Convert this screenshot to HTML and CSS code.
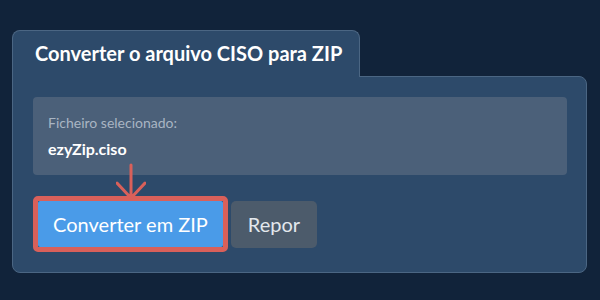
FILE: index.html
```html
<!DOCTYPE html>
<html>
<head>
    <title>Converter CISO para ZIP</title>
    <meta charset="UTF-8">
    <link rel="stylesheet" href="styles.css">
</head>
<body>
    <div class="card">
        <div class="tab">Converter o arquivo CISO para ZIP</div>
        <div class="panel">
            <div class="file-box">
                <div class="file-label">Ficheiro selecionado:</div>
                <div class="file-name">ezyZip.ciso</div>
            </div>
            <div class="actions">
                <div class="highlight">
                    <svg class="arrow" width="30" height="38" viewBox="0 0 30 38">
                        <path d="M15 2 V35 M1 20 L15 35 L29 20" fill="none" stroke="#d9605a" stroke-width="3" stroke-linecap="round" stroke-linejoin="round"/>
                    </svg>
                    <button class="btn btn-primary">Converter em ZIP</button>
                </div>
                <button class="btn btn-reset">Repor</button>
            </div>
        </div>
    </div>
</body>
</html>
```

FILE: styles.css
```css
body {
    font-family: Lato, "Open Sans", sans-serif;
    margin: 0;
    padding: 30px 13px 0 12px;
    background: #11233a;
    color: #ffffff;
}

.card {
    display: flex;
    flex-direction: column;
    align-items: flex-start;
}

.tab {
    position: relative;
    margin-bottom: -1px;
    padding: 10px 17px 12px 22px;
    background: #2d4a6a;
    border: 1px solid #4b6683;
    border-bottom: none;
    border-radius: 8px 8px 0 0;
    font-size: 20px;
    font-weight: bold;
}

.panel {
    align-self: stretch;
    background: #2d4a6a;
    border: 1px solid #4b6683;
    border-radius: 0 8px 8px 8px;
    padding: 20px 19px 20px 20px;
}

.file-box {
    background: #4b6079;
    border-radius: 4px;
    padding: 17px 15px 15px 15px;
    height: 46px;
}

.file-label {
    font-size: 14px;
    color: #a9b5c3;
}

.file-name {
    margin-top: 8px;
    font-size: 16px;
    font-weight: bold;
}

.actions {
    display: flex;
    align-items: center;
    margin-top: 21px;
}

.highlight {
    position: relative;
    display: flex;
    border: 5px solid #d9605a;
    border-radius: 5px;
}

.arrow {
    position: absolute;
    bottom: 100%;
    left: 50%;
    margin-left: -15px;
    margin-bottom: 0;
}

.btn {
    font-family: Lato, "Open Sans", sans-serif;
    font-size: 20px;
    height: 46px;
    border: none;
    cursor: pointer;
}

.btn-primary {
    width: 185px;
    background: #4a9be8;
    color: #ffffff;
    border-radius: 2px;
}

.btn-reset {
    margin-left: 3px;
    width: 86px;
    height: 47px;
    background: #4c5b6b;
    color: #e3e8ed;
    border-radius: 5px;
}
```
